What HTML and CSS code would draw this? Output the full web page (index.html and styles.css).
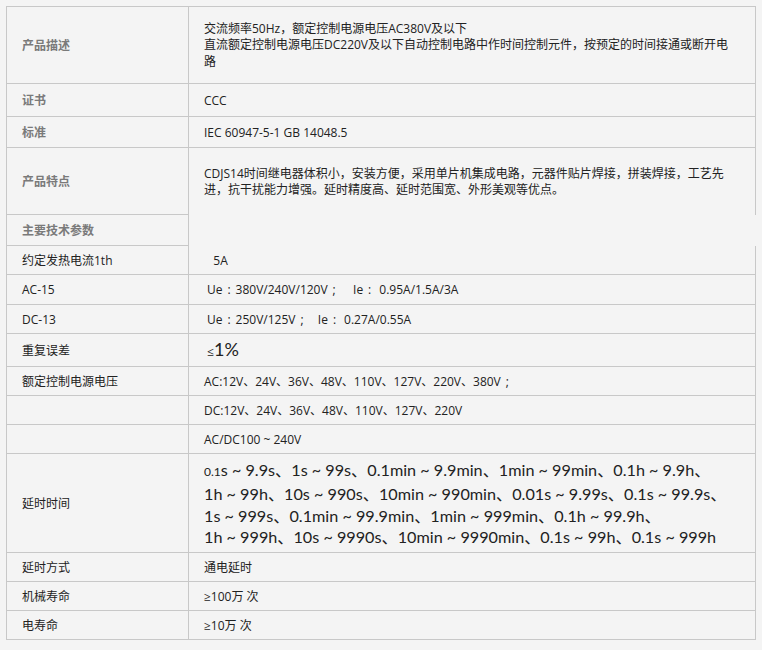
FILE: index.html
```html
<!DOCTYPE html>
<html lang="zh-CN">
<head>
<meta charset="utf-8">
<title>CDJS14 参数</title>
<link rel="stylesheet" href="styles.css">
</head>
<body>
<div class="spec">
  <div class="cell head"><p class="t">产品描述</p></div>
  <div class="cell val lines"><p class="t">交流频率50Hz，额定控制电源电压AC380V及以下<br>直流额定控制电源电压DC220V及以下自动控制电路中作时间控制元件，按预定的时间接通或断开电<br>路</p></div>

  <div class="cell head"><p class="t">证书</p></div>
  <div class="cell val"><p class="t">CCC</p></div>

  <div class="cell head"><p class="t">标准</p></div>
  <div class="cell val"><p class="t">IEC 60947-5-1 GB 14048.5</p></div>

  <div class="cell head"><p class="t">产品特点</p></div>
  <div class="cell val lines open"><p class="t">CDJS14时间继电器体积小，安装方便，采用单片机集成电路，元器件贴片焊接，拼装焊接，工艺先<br>进，抗干扰能力增强。延时精度高、延时范围宽、外形美观等优点。</p></div>

  <div class="cell head"><p class="t">主要技术参数</p></div>
  <div class="blank"></div>

  <div class="cell label"><p class="t">约定发热电流1th</p></div>
  <div class="cell val"><p class="t">&nbsp;&nbsp;&nbsp;5A</p></div>

  <div class="cell label"><p class="t">AC-15</p></div>
  <div class="cell val"><p class="t">&nbsp;Ue<span class="fw">:</span>380V/240V/120V<span class="fw">;</span>&nbsp;&nbsp;&nbsp; Ie<span class="fw">:</span>&nbsp;0.95A/1.5A/3A</p></div>

  <div class="cell label"><p class="t">DC-13</p></div>
  <div class="cell val"><p class="t">&nbsp;Ue<span class="fw">:</span>250V/125V<span class="fw">;</span>&nbsp;&nbsp; Ie<span class="fw">:</span>&nbsp;0.27A/0.55A</p></div>

  <div class="cell label"><p class="t">重复误差</p></div>
  <div class="cell val"><p class="t">&nbsp;<span class="le">≤</span><span class="big">1%</span></p></div>

  <div class="cell label"><p class="t">额定控制电源电压</p></div>
  <div class="cell val"><p class="t">AC:12V、24V、36V、48V、110V、127V、220V、380V<span class="fw">;</span></p></div>

  <div class="cell label"></div>
  <div class="cell val"><p class="t">DC:12V、24V、36V、48V、110V、127V、220V</p></div>

  <div class="cell label"></div>
  <div class="cell val"><p class="t">AC/DC100 ~ 240V</p></div>

  <div class="cell label"><p class="t">延时时间</p></div>
  <div class="cell val big-lines"><p class="t"><span class="small">0.1</span>s ~ 9.9s、1s ~ 99s、0.1min ~ 9.9min、1min ~ 99min、0.1h ~ 9.9h、<br>1h ~ 99h、10s ~ 990s、10min ~ 990min、0.01s ~ 9.99s、0.1s ~ 99.9s、<br>1s ~ 999s、0.1min ~ 99.9min、1min ~ 999min、0.1h ~ 99.9h、<br>1h ~ 999h、10s ~ 9990s、10min ~ 9990min、0.1s ~ 99h、0.1s ~ 999h</p></div>

  <div class="cell label"><p class="t">延时方式</p></div>
  <div class="cell val"><p class="t">通电延时</p></div>

  <div class="cell label"><p class="t">机械寿命</p></div>
  <div class="cell val"><p class="t">≥100万 次</p></div>

  <div class="cell label"><p class="t">电寿命</p></div>
  <div class="cell val"><p class="t">≥10万 次</p></div>
</div>
</body>
</html>
```

FILE: styles.css
```css
html, body {
  margin: 0;
  background: #f4f4f4;
}

body {
  padding: 6px;
  font-family: "Open Sans", "Noto Sans CJK SC", sans-serif;
  font-size: 12px;
  color: #222;
}

.spec {
  display: grid;
  width: 750px;
  box-sizing: border-box;
  grid-template-columns: 182px 567px;
  grid-template-rows: 77px 33px 31px 67px 31px 29px 30px 29px 33px 29px 29px 29px 99px 29px 29px 29px;
  border-top: 1px solid #c8c8c8;
  border-left: 1px solid #c8c8c8;
}

.cell {
  box-sizing: border-box;
  display: flex;
  align-items: center;
  border-right: 1px solid #c8c8c8;
  border-bottom: 1px solid #c8c8c8;
  padding: 0 0 0 15px;
  white-space: nowrap;
  line-height: 17px;
}

.t {
  margin: 0;
}

.head {
  color: #7a7a7a;
  font-weight: bold;
}

.label,
.val {
  color: #222;
}

.lines {
  line-height: 16.5px;
  padding-top: 1px;
}

.open {
  border-bottom: none;
}

.fw {
  display: inline-block;
  width: 13px;
  text-align: center;
}

.le {
  font-size: 12px;
}

.big {
  font-family: "Lato", "Noto Sans CJK SC", sans-serif;
  font-size: 18px;
}

.big-lines {
  font-family: "Lato", "Noto Sans CJK SC", sans-serif;
  font-size: 16.2px;
  line-height: 21.8px;
  padding-top: 1px;
}

.small {
  font-size: 12px;
}
```
